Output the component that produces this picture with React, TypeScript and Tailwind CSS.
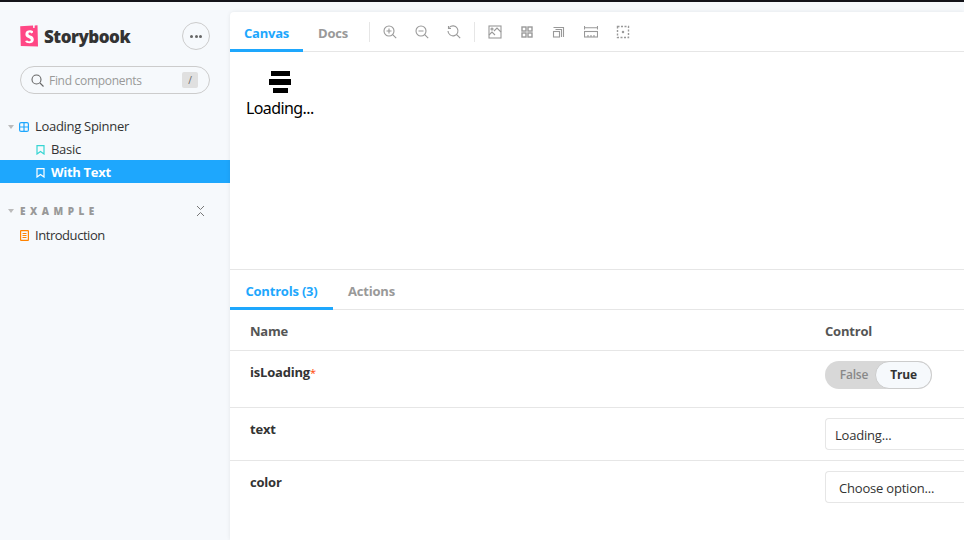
const font = { fontFamily: '"Open Sans", "Noto Sans", sans-serif' };

function Logo() {
  return (
    <svg width="18" height="22" viewBox="0 0 18 22">
      <path d="M0.200 1.200 L13 0.500 L13.200 3 L14.600 3 L14.700 0.400 L17.500 0.200 L18 21.600 L0.800 21 Z" fill="#ff4785" />
      <path d="M13 7.500c0-.8 0-1.200 0-1.200C11 4.600 5.600 4.700 5.400 9c-.2 4.600 5.400 3.600 5.400 6 0 1.800-2.600 1.700-3.400 0.400l-2.300 0.600c1 3 8.600 3.400 8.700-1.200.1-4.800-5.400-3.700-5.400-6 0-1.600 2.500-1.400 3-.4z" fill="#fff" />
    </svg>
  );
}

function ToolIcon({ children }: { children: React.ReactNode }) {
  return (
    <div className="flex h-[32px] w-[32px] items-center justify-center">
      <svg width="14" height="14" viewBox="0 0 14 14" fill="none" stroke="#999" strokeWidth="1.1">
        {children}
      </svg>
    </div>
  );
}

function Row({ name, required, height, children }: { name: string; required?: boolean; height: string; children: React.ReactNode }) {
  return (
    <div className={`flex border-b border-[#e6e6e6] pl-[20px] ${height}`}>
      <div className="w-[575px] pt-[12px] text-[13px] font-bold leading-[18px] text-[#333]">
        {name}
        {required && <span className="text-[11px] font-normal text-[#ff4400]">*</span>}
      </div>
      <div className="flex-1 pt-[10px]">{children}</div>
    </div>
  );
}

export default function App() {
  return (
    <div className="flex h-[540px] w-[964px] flex-col overflow-hidden bg-[#f6f9fc]" style={font}>
      <div className="h-[2px] shrink-0 bg-[#14141a]" />
      <div className="flex min-h-0 flex-1">
        <aside className="w-[230px] shrink-0 text-[13px] tracking-[-0.3px] text-[#333]">
          <div className="flex h-[48px] items-center justify-between pl-[20px] pr-[20px] pt-[20px]">
            <div className="flex items-center gap-[6px]">
              <Logo />
              <span className="pt-[1px] text-[17px] font-extrabold leading-[27px] tracking-[-0.5px] text-[#333]">Storybook</span>
            </div>
            <div className="flex h-[28px] w-[28px] items-center justify-center gap-[1.5px] rounded-full border border-[#ccc]">
              <span className="h-[3px] w-[3px] rounded-full bg-[#666]" />
              <span className="h-[3px] w-[3px] rounded-full bg-[#666]" />
              <span className="h-[3px] w-[3px] rounded-full bg-[#666]" />
            </div>
          </div>
          <div className="mx-[20px] mt-[16px] flex h-[28px] items-center rounded-full border border-[#ccc] pl-[10px] pr-[11px]">
            <svg width="13" height="13" viewBox="0 0 13 13" fill="none" stroke="#666" strokeWidth="1.1">
              <circle cx="5.500" cy="5.500" r="4.500" />
              <path d="M9 9l3.500 3.500" />
            </svg>
            <span className="ml-[5px] flex-1 pt-[1px] text-[12px] text-[#999]">Find components</span>
            <span className="flex h-[16px] w-[16px] items-center justify-center rounded-[2px] bg-[#e0e0e0] text-[10px] text-[#666]">/</span>
          </div>

          <div className="mt-[21px]">
            <div className="flex h-[23px] items-center pl-[8px]">
              <span className="h-0 w-0 border-x-[3px] border-t-[4px] border-x-transparent border-t-[#bbb]" />
              <svg className="ml-[5px]" width="10" height="10" viewBox="0 0 10 10" fill="none" stroke="#1ea7fd" strokeWidth="1.200">
                <rect x="0.600" y="0.600" width="8.800" height="8.800" rx="1.500" />
                <path d="M5 0.600v8.800M0.600 5h8.800" />
              </svg>
              <span className="ml-[6px]">Loading Spinner</span>
            </div>
            <div className="flex h-[22px] items-center pl-[36px] pt-[1px]">
              <svg width="9" height="10" viewBox="0 0 9 10" fill="none" stroke="#37d5d3" strokeWidth="1.200">
                <path d="M1 0.600h7v8.400l-3.500-2.400-3.500 2.400z" />
              </svg>
              <span className="ml-[6px]">Basic</span>
            </div>
            <div className="flex h-[23px] items-center bg-[#1ea7fd] pl-[36px] pt-[2px] font-bold text-white">
              <svg width="9" height="10" viewBox="0 0 9 10" fill="none" stroke="#fff" strokeWidth="1.200">
                <path d="M1 0.600h7v8.400l-3.500-2.400-3.500 2.400z" />
              </svg>
              <span className="ml-[6px]">With Text</span>
            </div>
          </div>

          <div className="mt-[20px] flex h-[16px] items-center pl-[8px] pr-[25px]">
            <span className="h-0 w-0 border-x-[3px] border-t-[4px] border-x-transparent border-t-[#bbb]" />
            <span className="ml-[6px] flex-1 text-[10px] font-extrabold leading-none tracking-[4.5px] text-[#999]">EXAMPLE</span>
            <svg width="9" height="12" viewBox="0 0 9 12" fill="none" stroke="#777" strokeWidth="1">
              <path d="M1 1l3.500 3.500L8 1M1 11l3.500-3.500L8 11" />
            </svg>
          </div>
          <div className="mt-[5px] flex h-[23px] items-center pl-[20px]">
            <svg width="9" height="11" viewBox="0 0 9 11" fill="none" stroke="#ff8300" strokeWidth="1.200">
              <rect x="0.600" y="0.600" width="7.800" height="9.800" rx="0.500" />
              <path d="M2.500 3.500h4M2.500 5.500h4M2.500 7.500h4" />
            </svg>
            <span className="ml-[6px] tracking-[-0.45px]">Introduction</span>
          </div>
        </aside>

        <main className="mt-[10px] flex min-w-0 flex-1 flex-col rounded-tl-[4px] bg-white tracking-[-0.2px] shadow-[0_0_4px_rgba(0,0,0,0.08)]">
          <div className="flex h-[40px] shrink-0 items-center border-b border-[#e6e6e6]">
            <div className="flex h-[40px] w-[73px] items-center justify-center border-b-[3px] border-[#1ea7fd] pt-[8px] text-[13px] font-bold text-[#1ea7fd]">Canvas</div>
            <div className="flex h-[40px] w-[66px] items-center justify-center pr-[6px] pt-[4px] text-[13px] font-bold text-[#999]">Docs</div>
            <div className="h-[20px] w-px bg-[#e6e6e6]" />
            <div className="ml-[4px] flex">
              <ToolIcon><circle cx="6" cy="6" r="5" /><path d="M9.700 9.700l3.500 3.500M3.500 6h5M6 3.500v5" /></ToolIcon>
              <ToolIcon><circle cx="6" cy="6" r="5" /><path d="M9.700 9.700l3.500 3.500M3.500 6h5" /></ToolIcon>
              <ToolIcon><path d="M2.300 2.500A5 5 0 1 1 1 6M9.700 9.700l3.500 3.500M1.500 1v2.500h2.500" /></ToolIcon>
            </div>
            <div className="mx-[4px] h-[20px] w-px bg-[#e6e6e6]" />
            <div className="flex">
              <ToolIcon><rect x="1" y="1" width="12" height="12" /><path d="M1 10l3-3 3 3M6 6l3-3 4 4" /><circle cx="4" cy="4" r="1" /></ToolIcon>
              <ToolIcon><rect x="2" y="2" width="4" height="4" strokeWidth="1.400" /><rect x="8" y="2" width="4" height="4" strokeWidth="1.400" /><rect x="2" y="8" width="4" height="4" strokeWidth="1.400" /><rect x="8" y="8" width="4" height="4" strokeWidth="1.400" /></ToolIcon>
              <ToolIcon><rect x="1.500" y="6.500" width="6" height="5.500" /><path d="M1.500 2.500h10V12M3.500 4.500h6V12" /></ToolIcon>
              <ToolIcon><path d="M0.500 1v3.500M13.500 1v3.500M0.500 2.700h13" /><rect x="0.500" y="6.500" width="13" height="5.500" /><path d="M4 10v2M7 10v2M10 10v2" /></ToolIcon>
              <ToolIcon><rect x="1.500" y="1.500" width="11" height="11" strokeWidth="1.400" strokeDasharray="2 1.500" /><circle cx="7" cy="7" r="0.700" fill="#999" /></ToolIcon>
            </div>
          </div>

          <div className="h-[218px] shrink-0 border-b border-[#e6e6e6] pl-[16px] pt-[19px]">
            <div className="flex w-[68px] flex-col items-center gap-[3px]">
              <div className="h-[5px] w-[19px] bg-black" />
              <div className="h-[6px] w-[22px] bg-black" />
              <div className="h-[5px] w-[15px] bg-black" />
            </div>
            <div className="mt-[4px] text-[16px] leading-[22px] tracking-[-0.6px] text-black" style={{ fontFamily: '"Noto Sans", sans-serif' }}>Loading...</div>
          </div>

          <div className="flex h-[40px] shrink-0 items-center border-b border-[#e6e6e6]">
            <div className="flex h-[40px] w-[103px] items-center justify-center border-b-[3px] border-[#1ea7fd] pt-[8px] text-[13px] font-bold text-[#1ea7fd]">Controls (3)</div>
            <div className="ml-[15px] pt-[4px] text-[13px] font-bold text-[#999]">Actions</div>
          </div>

          <div className="flex h-[41px] shrink-0 items-center border-b border-[#e6e6e6] pl-[20px] pt-[4px] text-[13px] font-bold text-[#555]">
            <div className="w-[575px]">Name</div>
            <div>Control</div>
          </div>

          <Row name="isLoading" required height="h-[57px]">
            <div className="flex h-[28px] w-[107px] items-center rounded-full bg-[#d8d8d8] text-[12px] font-bold">
              <div className="w-[50px] pl-[8px] text-center text-[12px] font-semibold text-[#888]">False</div>
              <div className="flex h-[28px] flex-1 items-center justify-center rounded-full border border-[#ccc] bg-[#f6f9fc] text-[#333]">True</div>
            </div>
          </Row>
          <Row name="text" height="h-[53px]">
            <div className="flex h-[32px] items-center rounded-l-[4px] border border-r-0 border-[#e6e6e6] pl-[9px] pt-[4px] text-[13px] text-[#333]">Loading...</div>
          </Row>
          <div className="flex pl-[20px]">
            <div className="w-[575px] pt-[12px] text-[13px] font-bold leading-[18px] text-[#333]">color</div>
            <div className="flex-1 pt-[10px]">
              <div className="flex h-[32px] items-center rounded-l-[4px] border border-r-0 border-[#e6e6e6] pl-[13px] pt-[4px] text-[13px] text-[#333]">Choose option...</div>
            </div>
          </div>
        </main>
      </div>
    </div>
  );
}
